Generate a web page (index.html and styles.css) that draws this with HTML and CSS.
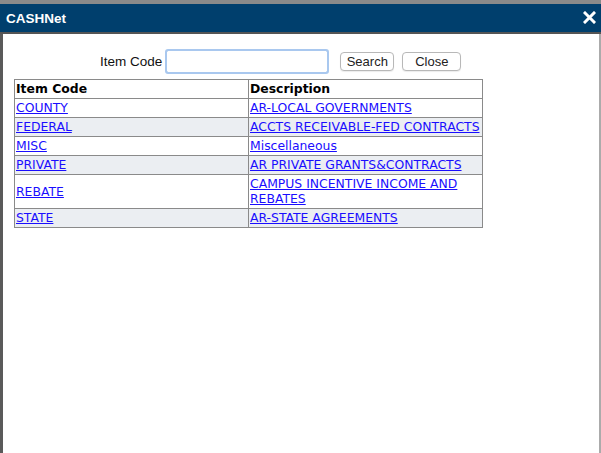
FILE: index.html
```html
<!DOCTYPE html>
<html>
<head>
<meta charset="utf-8">
<link rel="stylesheet" href="styles.css">
</head>
<body>
<div class="window">
  <div class="topstrip"></div>
  <div class="titlebar">
    <span class="title">CASHNet</span>
    <svg class="closex" width="13" height="13" viewBox="0 0 13 13"><path d="M2 2 L11 11 M11 2 L2 11" stroke="#fff" stroke-width="3" stroke-linecap="square"/></svg>
  </div>
  <div class="content">
    <div class="searchrow">
      <label class="lbl">Item Code</label>
      <input class="field" type="text">
      <button class="btn search">Search</button>
      <button class="btn close">Close</button>
    </div>
    <table class="grid">
      <tr class="head"><th>Item Code</th><th>Description</th></tr>
      <tr><td><a href="#">COUNTY</a></td><td><a href="#">AR-LOCAL GOVERNMENTS</a></td></tr>
      <tr class="alt"><td><a href="#">FEDERAL</a></td><td><a href="#">ACCTS RECEIVABLE-FED CONTRACTS</a></td></tr>
      <tr><td><a href="#">MISC</a></td><td><a href="#">Miscellaneous</a></td></tr>
      <tr class="alt"><td><a href="#">PRIVATE</a></td><td><a href="#">AR PRIVATE GRANTS&amp;CONTRACTS</a></td></tr>
      <tr><td><a href="#">REBATE</a></td><td><a href="#">CAMPUS INCENTIVE INCOME AND REBATES</a></td></tr>
      <tr class="alt"><td><a href="#">STATE</a></td><td><a href="#">AR-STATE AGREEMENTS</a></td></tr>
    </table>
  </div>
</div>
</body>
</html>
```
FILE: styles.css
```css
html, body { margin: 0; padding: 0; background: #fff; }
.window { width: 601px; height: 453px; display: flex; flex-direction: column; }
.topstrip { height: 4px; background: #8a8a8a; }
.titlebar {
  height: 30px; background: #003f6d; display: flex; align-items: center;
  justify-content: space-between; padding: 0 5px 0 6px; box-sizing: border-box;
  border-bottom: 2px solid #555;
}
.title { color: #fff; font: bold 13.5px "Liberation Sans", Arial, sans-serif; }
.closex { display: block; margin-top: -1px; }
.content {
  flex: 1; border-left: 3px solid #5a5a5a; border-right: 2px solid #ababab;
  padding: 15px 0 0 11px;
}
.searchrow { display: flex; align-items: center; height: 24px; padding-left: 86px; }
.lbl { font: 13.5px "Liberation Sans", Arial, sans-serif; color: #111; margin-right: 4px; }
.field {
  width: 162px; height: 23px; box-sizing: border-box; border: 1px solid #7aa7dc;
  outline: 2px solid #a9c8ef; outline-offset: -1px; border-radius: 2px; margin: 0 12px 0 0; padding: 0 3px;
}
.btn {
  font: 13px "Liberation Sans", Arial, sans-serif; color: #222; background: #fff;
  border: 1px solid #b8b8b8; border-radius: 4px; height: 19px; padding: 0;
  box-shadow: 0 1px 1px rgba(0,0,0,0.08);
}
.search { width: 54px; margin-right: 8px; }
.close { width: 59px; }
.grid {
  margin-top: 6px; border-collapse: collapse; width: 469px;
  font: 12.4px "DejaVu Sans", Verdana, sans-serif; border: 1px solid #7f7f7f;
}
.grid th, .grid td {
  border: 1px solid #8a8a8a; padding: 1px 1px 2px 1px; text-align: left; width: 50%;
  line-height: 15px; vertical-align: middle;
}
.grid th { font-weight: bold; color: #000; }
.grid tr.alt td { background: #ebeef2; }
.grid a { color: #1a0dff; text-decoration: underline; }
```
